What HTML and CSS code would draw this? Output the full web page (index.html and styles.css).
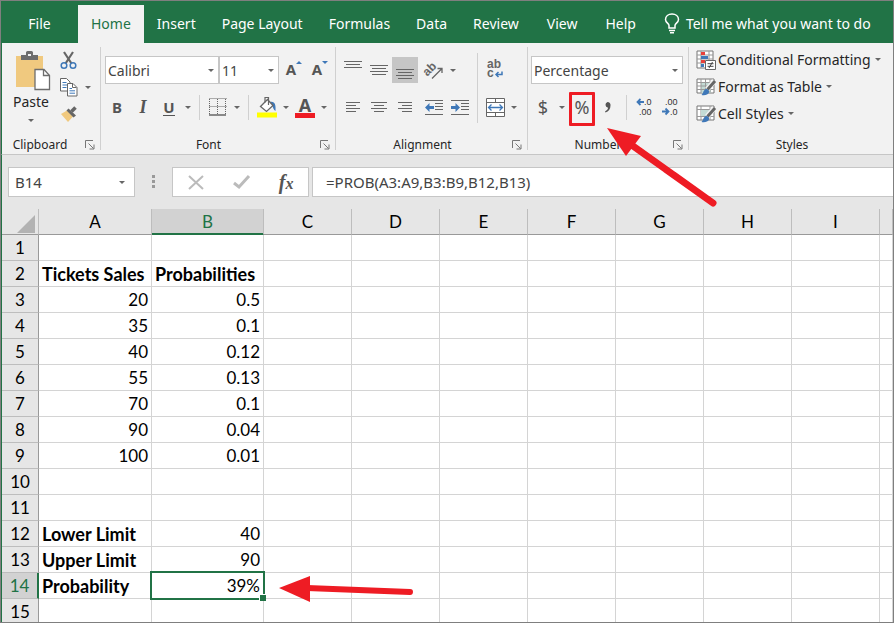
FILE: index.html
```html
<!DOCTYPE html>
<html lang="en">
<head>
    <meta charset="UTF-8">
    <meta name="viewport" content="width=device-width, initial-scale=1.0">
    <title>PROB function - Excel</title>
    <link rel="stylesheet" href="styles.css">
</head>
<body>
    <div class="window">
        <nav class="tabs">
            <button class="tab tab-file">File</button>
            <button class="tab active">Home</button>
            <button class="tab">Insert</button>
            <button class="tab">Page Layout</button>
            <button class="tab">Formulas</button>
            <button class="tab">Data</button>
            <button class="tab">Review</button>
            <button class="tab wide">View</button>
            <button class="tab wide">Help</button>
            <button class="tab wide tell-me">
                <svg width="16" height="21" viewBox="0 0 16 21" fill="none" stroke="#fff" stroke-width="1.5"><path d="M5 15v-2.500C5 10.500 1.500 9.500 1.500 6.500C1.500 3.300 4.300 1 8 1s6.500 2.300 6.500 5.500c0 3-3.500 4-3.500 6V15zM5 17.500h6M6 19.800h4"/></svg>
                Tell me what you want to do
            </button>
        </nav>

        <div class="ribbon">
            <section class="group clipboard">
                <div class="group-body">
                    <button class="paste">
                        <svg width="36" height="40" viewBox="0 0 36 40"><path d="M1 5h27v31H1z" fill="#f0c97f"/><path d="M6 9V4h5V1.500Q11 0 12.500 0h4Q18 0 18 1.500V4h5v5z" fill="#6d6d6d"/><path d="M13 3h3v2h-3z" fill="#f2f2f2"/><path d="M20 18.500h9l5.500 6V38.500H20z" fill="#fff" stroke="#6d6d6d" stroke-width="1.300"/><path d="M28.500 18.500v6h6" fill="none" stroke="#6d6d6d" stroke-width="1.300"/></svg>
                        <span>Paste</span>
                        <i class="arrow"></i>
                    </button>
                    <div class="stack">
                        <button class="tool" aria-label="Cut">
                            <svg width="18" height="19" viewBox="0 0 18 19" fill="none"><path d="M4 1l7.500 11.500M13 1L5.500 12.500" stroke="#666" stroke-width="2.200"/><circle cx="4" cy="14.500" r="2.800" stroke="#3f78b8" stroke-width="1.500"/><circle cx="13" cy="14.500" r="2.800" stroke="#3f78b8" stroke-width="1.500"/></svg>
                        </button>
                        <div class="row">
                            <button class="tool" aria-label="Copy">
                                <svg width="18" height="19" viewBox="0 0 18 19" fill="#fff" stroke="#666"><path d="M.5.500h6l3.500 3.500v9H.5z"/><path d="M2.500 4.500h4M2.500 7h5M2.500 9.500h4" stroke="#3f78b8"/><path d="M7.500 5.500h5.500l4 4v8.500H7.500z"/><path d="M12.500 5.500v4h4" fill="none"/><path d="M9.500 10.500h2.500M9.500 12.800h5.500M9.500 15.200h5.500" stroke="#3f78b8"/></svg>
                            </button>
                            <button class="caret" aria-label="Copy options"></button>
                        </div>
                        <button class="tool" aria-label="Format Painter">
                            <svg width="18" height="17" viewBox="0 0 18 17"><path d="M1 8l6-3.500 6 6-5 5.500z" fill="#f0c97f"/><path d="M6.500 4.500l2-2 7.500 7-2.500 2z" fill="#666"/><path d="M11.500 5.500l4-4" stroke="#666" stroke-width="3.500"/></svg>
                        </button>
                    </div>
                </div>
                <div class="group-footer"><span>Clipboard</span><button class="launcher" aria-label="Clipboard settings"><svg width="10" height="10" viewBox="0 0 10 10" fill="none" stroke="#777"><path d="M.5 8V.500H8M3.500 3.500l5 5M9 4.500V9H4.500"/></svg></button></div>
            </section>

            <section class="group font">
                <div class="group-body rows">
                    <div class="row">
                        <div class="combo combo-font"><select aria-label="Font"><option>Calibri</option></select></div>
                        <div class="combo combo-size"><select aria-label="Font size"><option>11</option></select></div>
                        <button class="tool grow-font" aria-label="Increase font size"><b>A</b><svg width="6" height="4" viewBox="0 0 6 4"><path d="M0 3l3-3 3 3z" fill="#3f78b8"/></svg></button>
                        <button class="tool grow-font" aria-label="Decrease font size"><b>A</b><svg width="6" height="4" viewBox="0 0 6 4"><path d="M0 0l3 3 3-3z" fill="#3f78b8"/></svg></button>
                    </div>
                    <div class="row">
                        <button class="tool letter"><b>B</b></button>
                        <button class="tool letter italic"><b>I</b></button>
                        <button class="tool letter underline"><b>U</b></button>
                        <button class="caret" aria-label="Underline options"></button>
                        <span class="sep"></span>
                        <button class="tool" aria-label="Borders">
                            <svg width="18" height="18" viewBox="0 0 18 18" stroke="#666" fill="none"><path d="M.5.500h17M.5 8.500h17M.5 1v15M8.500 1v15M16.500 1v15" stroke-dasharray="1 1"/><path d="M0 17h17" stroke-width="1.500"/></svg>
                        </button>
                        <button class="caret" aria-label="Border options"></button>
                        <span class="sep"></span>
                        <button class="tool" aria-label="Fill colour">
                            <svg width="20" height="22" viewBox="0 0 20 22"><path d="M13 6c5-1 6 3 5.500 9-2-1-2.500-4-3.500-6z" fill="#3f78b8"/><path d="M3.500 10.500l7-7L16 9.500 9.500 15.500z" fill="#fff" stroke="#666" stroke-width="1.300"/><path d="M8 6.500V1.500h3.500V9" fill="none" stroke="#666" stroke-width="1.200"/><path d="M0 16.500h20v5H0z" fill="#ff0"/></svg>
                        </button>
                        <button class="caret" aria-label="Fill options"></button>
                        <button class="tool font-color" aria-label="Font colour"><b>A</b></button>
                        <button class="caret" aria-label="Font colour options"></button>
                    </div>
                </div>
                <div class="group-footer"><span>Font</span><button class="launcher" aria-label="Font settings"><svg width="10" height="10" viewBox="0 0 10 10" fill="none" stroke="#777"><path d="M.5 8V.500H8M3.500 3.500l5 5M9 4.500V9H4.500"/></svg></button></div>
            </section>

            <section class="group alignment">
                <div class="group-body">
                    <div class="rows">
                        <div class="row">
                            <button class="tool" aria-label="Top Align"><svg width="18" height="18" viewBox="0 0 18 18" stroke="#666"><path d="M0 .5h18M2 3.500h14M0 6.500h18"/></svg></button>
                            <button class="tool" aria-label="Middle Align"><svg width="18" height="12" viewBox="0 0 18 12" stroke="#666"><path d="M0 1.500h18M2 4.500h14M0 7.500h18M2 10.500h14"/></svg></button>
                            <button class="tool pressed" aria-label="Bottom Align"><svg width="18" height="18" viewBox="0 0 18 18" stroke="#666"><path d="M0 8.500h18M2 11.500h14M0 14.500h18M2 17.500h14"/></svg></button>
                            <button class="tool orient" aria-label="Orientation"><svg width="20" height="20" viewBox="0 0 20 20"><text x="0" y="13" class="ab" transform="rotate(-45 6 11)">ab</text><path d="M8 18.500L18 8.500M13.500 8.500H18V13" fill="none" stroke="#666" stroke-width="1.300"/></svg></button>
                            <button class="caret" aria-label="Orientation options"></button>
                        </div>
                        <div class="row">
                            <button class="tool" aria-label="Align Left"><svg width="14" height="12" viewBox="0 0 14 12" stroke="#666"><path d="M0 1.500h14M0 4.500h10M0 7.500h14M0 10.500h10"/></svg></button>
                            <button class="tool" aria-label="Center"><svg width="16" height="12" viewBox="0 0 16 12" stroke="#666"><path d="M0 1.500h16M3 4.500h10M0 7.500h16M3 10.500h10"/></svg></button>
                            <button class="tool" aria-label="Align Right"><svg width="14" height="12" viewBox="0 0 14 12" stroke="#666"><path d="M0 1.500h14M4 4.500h10M0 7.500h14M4 10.500h10"/></svg></button>
                            <button class="tool orient" aria-label="Decrease Indent"><svg width="18" height="17" viewBox="0 0 18 17" stroke="#666"><path d="M0 1.500h18M10 4.500h8M10 7.500h8M10 10.500h8M0 15.500h18"/><path d="M0 8.500L4.500 4v3H9v3H4.500v3z" fill="#3f78b8" stroke="none"/></svg></button>
                            <button class="tool" aria-label="Increase Indent"><svg width="18" height="17" viewBox="0 0 18 17" stroke="#666"><path d="M0 1.500h18M10 4.500h8M10 7.500h8M10 10.500h8M0 15.500h18"/><path d="M9 8.500L4.500 4v3H0v3h4.500v3z" fill="#3f78b8" stroke="none"/></svg></button>
                        </div>
                    </div>
                    <span class="sep tall"></span>
                    <div class="rows">
                        <div class="row">
                            <button class="tool" aria-label="Wrap Text"><svg width="18" height="20" viewBox="0 0 18 20"><text x="1" y="8" class="ab">ab</text><text x="1" y="17" class="ab">c</text><path d="M16 11.500v3h-6M12.500 12l-2.500 2.500 2.500 2.500" fill="none" stroke="#3f78b8" stroke-width="1.500"/></svg></button>
                        </div>
                        <div class="row">
                            <button class="tool" aria-label="Merge &amp; Center"><svg width="19" height="19" viewBox="0 0 19 19" fill="#fff" stroke="#666"><path d="M.5.500h18v18H.5zM.5 4.500h18M.5 14.500h18M9.500.500v4M9.500 14.500v4"/><path d="M3 9.500h13M5.500 6.500l-3 3 3 3M13.500 6.500l3 3-3 3" fill="none" stroke="#3f78b8" stroke-width="1.300"/></svg></button>
                            <button class="caret" aria-label="Merge options"></button>
                        </div>
                    </div>
                </div>
                <div class="group-footer"><span>Alignment</span><button class="launcher" aria-label="Alignment settings"><svg width="10" height="10" viewBox="0 0 10 10" fill="none" stroke="#777"><path d="M.5 8V.500H8M3.500 3.500l5 5M9 4.500V9H4.500"/></svg></button></div>
            </section>

            <section class="group number">
                <div class="group-body rows">
                    <div class="row">
                        <div class="combo combo-format"><select aria-label="Number format"><option>Percentage</option></select></div>
                    </div>
                    <div class="row">
                        <button class="tool symbol">$</button>
                        <button class="caret" aria-label="Currency options"></button>
                        <button class="tool symbol percent">%</button>
                        <button class="tool" aria-label="Comma Style"><svg width="8" height="11" viewBox="0 0 8 11"><path d="M3.500 0a3 3 0 0 1 3 3.500C6.500 7 4.500 9.500 1.500 10.500L1 9.500C3 8.500 4 7 4 5.800A3 3 0 0 1 3.500 0z" fill="#555"/></svg></button>
                        <span class="sep"></span>
                        <button class="tool" aria-label="Increase Decimal"><svg width="18" height="20" viewBox="0 0 18 20"><text x="8" y="8" class="dec">.0</text><text x="3" y="18" class="dec">.00</text><path d="M8 5H2M4.500 2l-3 3 3 3" fill="none" stroke="#3f78b8" stroke-width="1.800"/></svg></button>
                        <button class="tool" aria-label="Decrease Decimal"><svg width="18" height="20" viewBox="0 0 18 20"><text x="3" y="8" class="dec">.00</text><text x="8" y="18" class="dec">.0</text><path d="M0 14.500h6M3.500 11.500l3 3-3 3" fill="none" stroke="#3f78b8" stroke-width="1.800"/></svg></button>
                    </div>
                </div>
                <div class="group-footer"><span>Number</span><button class="launcher" aria-label="Number settings"><svg width="10" height="10" viewBox="0 0 10 10" fill="none" stroke="#777"><path d="M.5 8V.500H8M3.500 3.500l5 5M9 4.500V9H4.500"/></svg></button></div>
            </section>

            <section class="group styles">
                <div class="style-list">
                    <button class="style-item">
                        <svg width="20" height="20" viewBox="0 0 20 20"><path d="M1 1h16v17H1z" fill="#fff" stroke="#777"/><path d="M5 1v17M13 1v17M1 5h16M1 9h16M1 13h16" stroke="#999"/><path d="M5 2h4v3H5zM5 10h4v3H5z" fill="#e8403a"/><path d="M5 6h7v3H5zM5 14h3v3H5z" fill="#3f78b8"/><path d="M9.500 10.500h10v9h-10z" fill="#fff" stroke="#666"/><path d="M11.500 13.700h6M11.500 16.300h6M16.500 12l-3.500 6" stroke="#444"/></svg>
                        Conditional Formatting<i class="arrow"></i>
                    </button>
                    <button class="style-item">
                        <svg width="20" height="20" viewBox="0 0 20 20"><path d="M1 2h17v14H1z" fill="#fff" stroke="#777"/><path d="M5 6h10v10H5z" fill="#c3dbd5"/><path d="M1 5.500h17M1 9h17M1 12.500h17M5 2v14M9.500 2v14M14 2v14" stroke="#999"/><path d="M18.500 4L11 12.500" stroke="#f2f2f2" stroke-width="5"/><path d="M19 4l-7.500 8.500" stroke="#666" stroke-width="3"/><path d="M10 12c2 0 3.500 1.500 3 3.500-1 2.500-4 3-7.500 2.500 2-1.500 1.500-5 4.500-6z" fill="#3f78b8"/></svg>
                        Format as Table<i class="arrow"></i>
                    </button>
                    <button class="style-item">
                        <svg width="20" height="20" viewBox="0 0 20 20"><path d="M1 2h17v14H1z" fill="#fff" stroke="#777"/><path d="M1 5.500h17M1 12.500h17M5 2v14M14 2v14" stroke="#999"/><path d="M5 6h9v6H5z" fill="#c3dbd5"/><path d="M18.500 4L11 12.500" stroke="#f2f2f2" stroke-width="5"/><path d="M19 4l-7.500 8.500" stroke="#666" stroke-width="3"/><path d="M10 12c2 0 3.500 1.500 3 3.500-1 2.500-4 3-7.500 2.500 2-1.500 1.500-5 4.500-6z" fill="#3f78b8"/></svg>
                        Cell Styles<i class="arrow"></i>
                    </button>
                </div>
                <div class="group-footer"><span>Styles</span></div>
            </section>
        </div>

        <div class="formula-bar">
            <div class="name-box"><input type="text" value="B14" aria-label="Name Box"><button class="caret" aria-label="Names"></button></div>
            <svg class="dots" width="3" height="13" viewBox="0 0 3 13" fill="#999"><path d="M0 0h3v3H0zM0 5h3v3H0zM0 10h3v3H0z"/></svg>
            <div class="entry-buttons">
                <button aria-label="Cancel"><svg width="16" height="15" viewBox="0 0 16 15" fill="none" stroke="#bbb" stroke-width="2"><path d="M1 1l14 13M15 1L1 14"/></svg></button>
                <button aria-label="Enter"><svg width="17" height="14" viewBox="0 0 17 14" fill="none" stroke="#bbb" stroke-width="3"><path d="M1 8l5 4L16 1"/></svg></button>
                <button class="fx" aria-label="Insert Function">f<small>x</small></button>
            </div>
            <input class="formula" type="text" value="=PROB(A3:A9,B3:B9,B12,B13)" aria-label="Formula">
        </div>

        <div class="sheet">
            <table>
                <colgroup>
                    <col class="col-head"><col class="col-a"><col class="col-b">
                    <col class="col"><col class="col"><col class="col"><col class="col"><col class="col"><col class="col"><col class="col">
                    <col>
                </colgroup>
                <thead>
                    <tr><th class="corner"><svg width="18" height="18" viewBox="0 0 18 18"><path d="M18 0v18H0z" fill="#b2b2b2"/></svg></th><th>A</th><th class="selected">B</th><th>C</th><th>D</th><th>E</th><th>F</th><th>G</th><th>H</th><th>I</th><th></th></tr>
                </thead>
                <tbody>
                    <tr><th>1</th><td></td><td></td><td></td><td></td><td></td><td></td><td></td><td></td><td></td><td></td></tr>
                    <tr><th>2</th><td class="label">Tickets Sales</td><td class="label">Probabilities</td><td></td><td></td><td></td><td></td><td></td><td></td><td></td><td></td></tr>
                    <tr><th>3</th><td>20</td><td>0.5</td><td></td><td></td><td></td><td></td><td></td><td></td><td></td><td></td></tr>
                    <tr><th>4</th><td>35</td><td>0.1</td><td></td><td></td><td></td><td></td><td></td><td></td><td></td><td></td></tr>
                    <tr><th>5</th><td>40</td><td>0.12</td><td></td><td></td><td></td><td></td><td></td><td></td><td></td><td></td></tr>
                    <tr><th>6</th><td>55</td><td>0.13</td><td></td><td></td><td></td><td></td><td></td><td></td><td></td><td></td></tr>
                    <tr><th>7</th><td>70</td><td>0.1</td><td></td><td></td><td></td><td></td><td></td><td></td><td></td><td></td></tr>
                    <tr><th>8</th><td>90</td><td>0.04</td><td></td><td></td><td></td><td></td><td></td><td></td><td></td><td></td></tr>
                    <tr><th>9</th><td>100</td><td>0.01</td><td></td><td></td><td></td><td></td><td></td><td></td><td></td><td></td></tr>
                    <tr><th>10</th><td></td><td></td><td></td><td></td><td></td><td></td><td></td><td></td><td></td><td></td></tr>
                    <tr><th>11</th><td></td><td></td><td></td><td></td><td></td><td></td><td></td><td></td><td></td><td></td></tr>
                    <tr><th>12</th><td class="label">Lower Limit</td><td>40</td><td></td><td></td><td></td><td></td><td></td><td></td><td></td><td></td></tr>
                    <tr><th>13</th><td class="label">Upper Limit</td><td>90</td><td></td><td></td><td></td><td></td><td></td><td></td><td></td><td></td></tr>
                    <tr><th class="selected">14</th><td class="label">Probability</td><td class="current">39%</td><td></td><td></td><td></td><td></td><td></td><td></td><td></td><td></td></tr>
                    <tr><th>15</th><td></td><td></td><td></td><td></td><td></td><td></td><td></td><td></td><td></td><td></td></tr>
                </tbody>
            </table>
        </div>

        <svg class="pointer pointer-percent" width="112" height="82" viewBox="0 0 112 82"><path d="M26 19l80 57" stroke="#ee1c24" stroke-width="7" stroke-linecap="round"/><path d="M0 1l34 8-15 20z" fill="#ee1c24"/></svg>
        <svg class="pointer pointer-result" width="136" height="28" viewBox="0 0 136 28"><path d="M28 13l103 4" stroke="#ee1c24" stroke-width="6" stroke-linecap="round"/><path d="M0 13L31 1v26z" fill="#ee1c24"/></svg>
    </div>
</body>
</html>
```

FILE: styles.css
```css
* {
    box-sizing: border-box;
}
body {
    margin: 0;
    font-family: "Noto Sans", "Open Sans", sans-serif;
    font-size: 14px;
    color: #262626;
}
button, input, select {
    font: inherit;
    color: inherit;
    margin: 0;
    padding: 0;
    border: none;
    border-radius: 0;
    background: none;
}
svg {
    display: block;
    flex: none;
    overflow: visible;
}
.window {
    position: relative;
    display: flex;
    flex-direction: column;
    height: 100vh;
    border: 1px solid #7f7f7f;
    overflow: hidden;
    background: #e6e6e6;
}

/* tabs */
.tabs {
    display: flex;
    height: 42px;
    padding-top: 4px;
    background: #217346;
    flex: none;
}
.tab {
    padding: 0 13px 2px;
    color: #fff;
    font-size: 14px;
    white-space: nowrap;
}
.tab.wide {
    padding-left: 15px;
}
.tab-file {
    width: 77px;
}
.tab.active {
    background: #f2f2f2;
    color: #217346;
}
.tell-me {
    display: flex;
    align-items: center;
    gap: 6px;
}

/* ribbon */
.ribbon {
    display: flex;
    padding: 4px 0;
    background: #f2f2f2;
    border-left: 1px solid #217346;
    border-bottom: 1px solid #c6c6c6;
    flex: none;
}
.group {
    display: flex;
    flex-direction: column;
    justify-content: space-between;
    height: 103px;
    border-right: 1px solid #d0d0d0;
    flex: none;
}
.group.clipboard { width: 99px; }
.group.font { width: 235px; padding-left: 3px; }
.group.alignment { width: 192px; padding-left: 4px; }
.group.number { width: 161px; padding-left: 2px; }
.group.styles { flex: 1; border-right: none; padding-left: 7px; }
.group-body {
    display: flex;
    padding-top: 9px;
}
.rows {
    display: flex;
    flex-direction: column;
    gap: 10px;
}
.row {
    display: flex;
    align-items: center;
}
.rows .row:first-child { height: 28px; }
.rows .row:last-child { height: 26px; }
.group-footer {
    display: flex;
    align-items: center;
    gap: 7px;
    height: 10px;
    padding-right: 5px;
    font-size: 12px;
    line-height: 12px;
}
.group-footer span {
    flex: 1;
    text-align: center;
}
.tool {
    display: flex;
    align-items: center;
    justify-content: center;
    width: 26px;
    height: 26px;
    flex: none;
    color: #555;
}
.tool.pressed { background: #c6c6c6; }
.tool.orient { margin-left: 3px; }
.caret {
    display: flex;
    align-items: center;
    justify-content: center;
    width: 12px;
    height: 26px;
    flex: none;
}
.caret::after, .combo::after, .arrow {
    content: "";
    border: 3px solid transparent;
    border-top-color: #666;
    border-bottom: none;
}
.sep {
    width: 1px;
    height: 25px;
    margin: 0 5px;
    background: #d0d0d0;
}
.sep.tall {
    height: 70px;
    margin: -3px 4px 0;
}
.letter { font-size: 15px; }
.italic {
    font-family: "Liberation Serif", serif;
    font-size: 18px;
    font-style: italic;
}
.underline b { border-bottom: 1px solid #555; line-height: 16px; }
.grow-font { align-items: flex-start; font-size: 15px; padding: 2px 0 0 4px; }
.grow-font svg { margin-top: 2px; }
.font-color b {
    width: 20px;
    border-bottom: 5px solid #ee1c24;
    font-size: 18px;
    line-height: 16px;
}
.ab { font-family: "Liberation Sans", sans-serif; font-size: 12px; font-weight: bold; fill: #666; }
.dec { font-family: "Liberation Sans", sans-serif; font-size: 9px; fill: #333; }
.symbol { font-size: 18px; }
.percent {
    height: 34px;
    margin: 4px 0 0 1px;
    padding-bottom: 4px;
    border: 3px solid #ee1c24;
    border-radius: 1px;
}

.combo {
    display: flex;
    align-items: center;
    height: 28px;
    margin-left: 1px;
    padding-right: 4px;
    background: #fff;
    border: 1px solid #c6c6c6;
    color: #444;
}
.combo select {
    flex: 1;
    height: 26px;
    padding-left: 2px;
    appearance: none;
}
.combo-font { width: 114px; }
.combo-size { width: 60px; margin-left: 0; }
.combo-format { width: 152px; }

.paste {
    display: flex;
    flex-direction: column;
    align-items: center;
    width: 58px;
    margin-top: -5px;
}
.paste svg { margin-left: 4px; }
.paste span { line-height: 22px; }
.paste .arrow { margin: 6px 0 0; }
.stack {
    margin-top: -9px;
}
.stack .tool { height: 27px; width: 18px; }
.stack .caret { margin-left: 4px; }

.style-list {
    display: flex;
    flex-direction: column;
}
.style-item {
    display: flex;
    align-items: center;
    align-self: flex-start;
    gap: 2px;
    height: 27px;
    padding-bottom: 2px;
    white-space: nowrap;
}
.arrow { margin-left: 2px; }

/* formula bar */
.formula-bar {
    display: flex;
    padding: 12px 0;
    border-left: 1px solid #217346;
    flex: none;
    color: #444;
    font-size: 15px;
}
.formula-bar > * {
    height: 30px;
}
.name-box, .entry-buttons, .formula {
    background: #fff;
    border: 1px solid #c6c6c6;
}
.name-box {
    display: flex;
    align-items: center;
    width: 127px;
    margin-left: 6px;
    padding: 0 6px;
}
.name-box input { flex: 1; min-width: 0; }
.formula-bar .dots {
    height: 13px;
    margin: 8px 17px;
}
.entry-buttons {
    display: flex;
    justify-content: space-around;
    align-items: center;
    width: 137px;
}
.fx {
    font-family: "Liberation Serif", serif;
    font-size: 20px;
    font-style: italic;
    font-weight: bold;
    color: #555;
}
.fx small { font-size: 16px; }
.formula {
    flex: 1;
    min-width: 0;
    margin-left: 3px;
    padding-left: 13px;
    border-right: none;
}

/* sheet */
.sheet {
    flex: 1;
    min-height: 0;
    overflow: hidden;
    border-left: 1px solid #217346;
}
table {
    width: 100%;
    table-layout: fixed;
    border-collapse: separate;
    border-spacing: 0;
    font-family: Lato, sans-serif;
    font-size: 17px;
    line-height: 24px;
    color: #000;
}
.col-head { width: 37px; }
.col-a { width: 113px; }
.col-b { width: 112px; }
.col { width: 88px; }
th, td {
    height: 26px;
    padding: 1px 3px 0;
    border-right: 1px solid #d4d4d4;
    border-bottom: 1px solid #d4d4d4;
    white-space: nowrap;
}
th {
    padding: 1px 0 0;
    background: #e6e6e6;
    font-weight: normal;
    border-color: #bdbdbd;
}
thead th { border-bottom-color: #999; }
tbody th { border-right-color: #999; }
td {
    background: #fff;
    text-align: right;
}
td.label {
    text-align: left;
    font-size: 18px;
    font-weight: bold;
}
.corner svg { margin: 3px 3px 0 auto; }
th.selected {
    background: #d2d2d2;
    color: #217346;
}
thead th.selected { box-shadow: inset 0 -1px #217346; border-bottom-color: #217346; }
tbody th.selected { border-right: 2px solid #217346; }
.current { position: relative; }
.current::before {
    content: "";
    position: absolute;
    inset: -2px;
    border: 2px solid #217346;
}
.current::after {
    content: "";
    position: absolute;
    right: -3px;
    bottom: -3px;
    width: 6px;
    height: 6px;
    background: #217346;
    border: solid #fff;
    border-width: 1px 0 0 1px;
}

/* red callout arrows */
.pointer {
    position: absolute;
}
.pointer-percent { left: 606px; top: 126px; }
.pointer-result { left: 278px; top: 574px; }
```
